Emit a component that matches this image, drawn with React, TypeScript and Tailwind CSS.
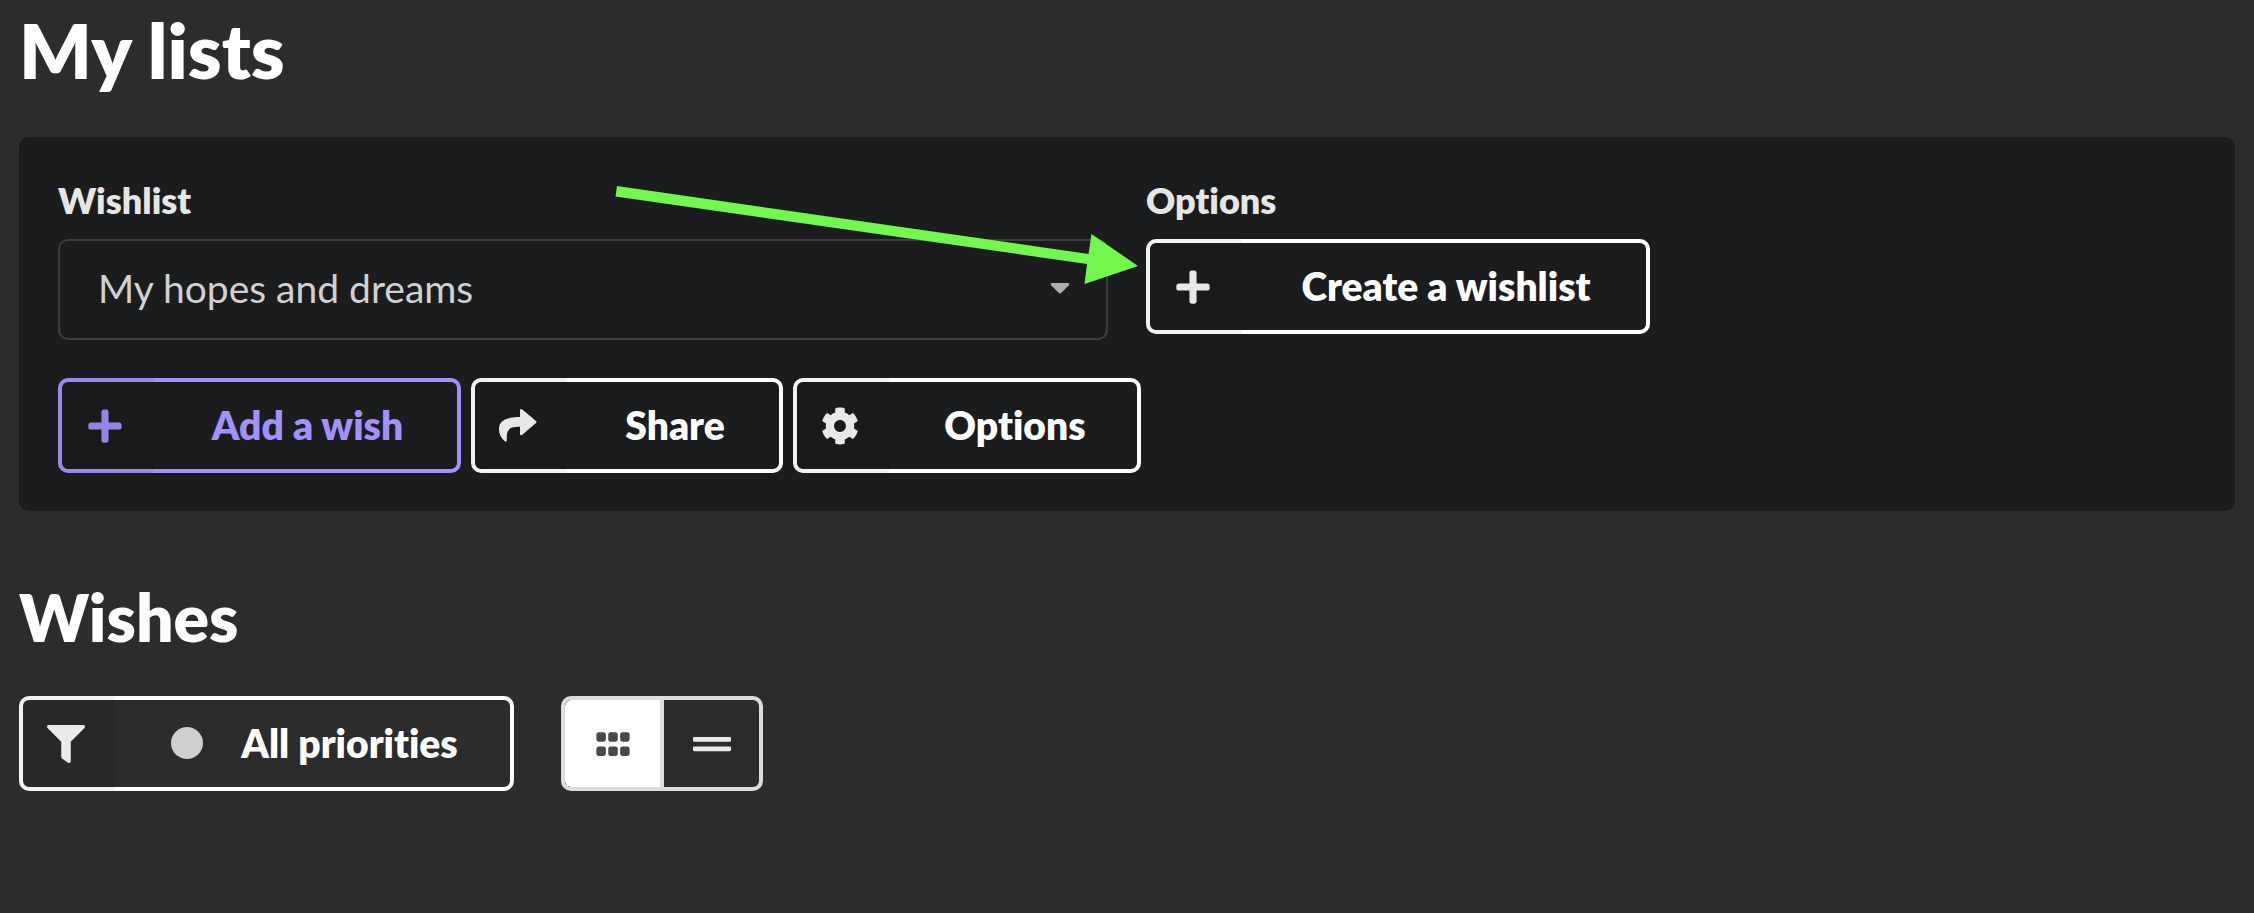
import type { ReactNode } from "react";
import {
  FaCaretDown,
  FaCog,
  FaFilter,
  FaGripHorizontal,
  FaGripLines,
  FaPlus,
} from "react-icons/fa";

type LabeledButtonProps = {
  icon: ReactNode;
  className: string;
  children: ReactNode;
};

function LabeledButton({ icon, className, children }: LabeledButtonProps) {
  return (
    <button
      type="button"
      className={`flex h-[95px] overflow-hidden rounded-[10px] text-[39px] leading-[48px] font-extrabold ${className}`}
    >
      <span className="flex w-24 shrink-0 items-center self-stretch bg-black/5 pl-7 text-[38px]">
        <span className="opacity-90">{icon}</span>
      </span>
      <span className="flex flex-1 items-center justify-center self-stretch pb-[2px] whitespace-nowrap">
        {children}
      </span>
    </button>
  );
}

const white = "text-white shadow-[inset_0_0_0_4px_#ffffff]";
const violet = "text-[#a291fb] shadow-[inset_0_0_0_4px_#a291fb]";

function ShareIcon() {
  return (
    <svg aria-hidden="true" viewBox="0 0 38 38" className="size-[38px]">
      <path
        fill="currentColor"
        d="M21 3.500 C21 1.800 22.200 1.500 23.300 2.400 L37 14 Q38 15 37 16 L23.300 27.700 C22.200 28.600 21 28.200 21 26.700 V19.800 C11 19.900 7.300 21.500 7.800 32.500 C7.900 35 7 35.300 5.500 34 C2 31 0 27 0 22.500 C0 14 6 10.200 21 10 Z"
      />
    </svg>
  );
}

function PointerArrow() {
  return (
    <svg
      aria-hidden="true"
      viewBox="0 0 523 100"
      className="pointer-events-none absolute top-[6px] right-full mr-2 h-[100px] w-[523px]"
    >
      <path
        fill="#72f84c"
        d="M2 2 L473.500 70 L476.500 50 L523 82 L469.500 100 L472 80 L0.500 12.500 Z"
      />
    </svg>
  );
}

export default function App() {
  return (
    <main className="min-h-screen bg-[#2c2c2c] px-[19px] pt-[6px] font-['Lato',sans-serif] text-white [font-variant-ligatures:none]">
      <h1 className="text-[76px] leading-[88px] font-extrabold">My lists</h1>

      <section className="mt-[43px] rounded-[10px] bg-[#1b1c1d] px-[39px] pt-[41px] pb-[38px]">
        <div className="grid grid-cols-2 gap-[38px]">
          <div>
            <label
              htmlFor="wishlist"
              className="block text-[36px] leading-[44px] font-extrabold text-[#e6e6e6]"
            >
              Wishlist
            </label>
            <div className="relative mt-[17px]">
              <select
                id="wishlist"
                className="block h-[101px] w-full appearance-none rounded-[10px] border-2 border-[#3e3f40] bg-[#1b1c1d] pr-24 pb-1 pl-[38px] text-[39px] leading-[48px] text-[#d1d1d1]"
              >
                <option>My hopes and dreams</option>
              </select>
              <FaCaretDown className="pointer-events-none absolute top-8 right-8 size-8 text-[#aeaeae]" />
            </div>
          </div>
          <div className="relative">
            <h2 className="text-[36px] leading-[44px] font-extrabold text-[#e6e6e6]">
              Options
            </h2>
            <LabeledButton
              icon={<FaPlus />}
              className={`mt-[17px] w-[504px] ${white}`}
            >
              Create a wishlist
            </LabeledButton>
            <PointerArrow />
          </div>
        </div>

        <div className="mt-[38px] flex gap-[10px]">
          <LabeledButton icon={<FaPlus />} className={`w-[403px] ${violet}`}>
            Add a wish
          </LabeledButton>
          <LabeledButton icon={<ShareIcon />} className={`w-[312px] ${white}`}>
            Share
          </LabeledButton>
          <LabeledButton icon={<FaCog />} className={`w-[348px] ${white}`}>
            Options
          </LabeledButton>
        </div>
      </section>

      <h2 className="mt-[68px] text-[66px] leading-[76px] font-extrabold">
        Wishes
      </h2>

      <div className="mt-[41px] flex gap-[47px]">
        <LabeledButton icon={<FaFilter />} className={`w-[495px] ${white}`}>
          <span className="mr-[38px] size-8 rounded-full bg-[#cfcfcf]" />
          All priorities
        </LabeledButton>
        <div className="flex h-[95px] w-[202px] overflow-hidden rounded-[10px] border-4 border-[#dcddde] text-[38px]">
          <button
            type="button"
            aria-label="Grid view"
            aria-pressed="true"
            className="flex flex-1 items-center justify-center rounded-l-md border-r-4 border-[#dcddde] bg-white text-[#484848]"
          >
            <FaGripHorizontal />
          </button>
          <button
            type="button"
            aria-label="List view"
            aria-pressed="false"
            className="flex flex-1 items-center justify-center text-[#e9e9e9]"
          >
            <FaGripLines />
          </button>
        </div>
      </div>
    </main>
  );
}
